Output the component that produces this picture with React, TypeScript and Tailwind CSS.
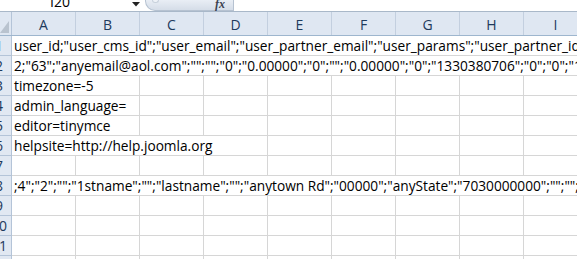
import React from "react";

const cols = ["A", "B", "C", "D", "E", "F", "G", "H", "I"];

// text per row and how many columns it spills across
const rows: { text?: string; span?: number }[] = [
  {
    text: 'user_id;"user_cms_id";"user_email";"user_partner_email";"user_params";"user_partner_id";"user_partner_name"',
    span: 9,
  },
  {
    text: '2;"63";"anyemail@aol.com";"";"";"0";"0.00000";"0";"";"0.00000";"0";"1330380706";"0";"0";"1441";"0"',
    span: 9,
  },
  { text: "timezone=-5", span: 2 },
  { text: "admin_language=", span: 2 },
  { text: "editor=tinymce", span: 2 },
  { text: "helpsite=http://help.joomla.org", span: 4 },
  {},
  {
    text: ';4";"2";"";"1stname";"";"lastname";"";"anytown Rd";"00000";"anyState";"7030000000";"";"";"";"0"',
    span: 9,
  },
  {},
  {},
  {},
  {},
];

function RowHeader({ n }: { n: number }) {
  return (
    <div className="w-[12px] shrink-0 h-full overflow-hidden bg-[#e1e8f2] border-r border-b border-[#b4c4d8]">
      <div className="w-[26px] -ml-[14px] pt-[1px] text-center text-[14px] leading-[18px] text-[#1e3a5c]">
        {n}
      </div>
    </div>
  );
}

function Cell({ width, children }: { width: number; children?: React.ReactNode }) {
  return (
    <div
      className="shrink-0 h-full border-r border-b border-[#d6d6d6] pl-[2px] pt-[1px] whitespace-nowrap overflow-visible text-[13.7px] leading-[18px] text-black"
      style={{ width }}
    >
      {children}
    </div>
  );
}

export default function App() {
  return (
    <div
      className="w-[577px] h-[259px] overflow-hidden bg-white"
      style={{ fontFamily: '"Open Sans", "Liberation Sans", sans-serif' }}
    >
      {/* name box + formula bar strip */}
      <div className="h-[12px] flex border-b border-[#a9b8c9] overflow-hidden">
        <div className="w-[145px] shrink-0 relative bg-white">
          <div className="w-[120px] text-center text-[14px] leading-[14px] -mt-[5px] text-black">I20</div>
          <svg className="absolute left-[132px] top-[2px]" width="8" height="5" viewBox="0 0 8 5">
            <polygon points="0,0 8,0 4,4.5" fill="#222" />
          </svg>
        </div>
        <div className="w-[89px] shrink-0 h-[11px] relative rounded-bl-[10px] border-l border-b border-r border-[#b6c2d1] bg-gradient-to-b from-[#e9eef5] to-[#d5dde8]">
          <div className="absolute left-[6px] top-0 w-[7px] h-[3px] rounded-b-[3px] bg-[#eef2f7] border border-t-0 border-[#c8d1dc]" />
          <span
            className="absolute right-[8px] -top-[3px] text-[12px] leading-[14px] italic font-bold text-[#3b4250]"
            style={{ fontFamily: '"Liberation Serif", serif' }}
          >
            fx
          </span>
        </div>
        <div className="flex-1 bg-white" />
      </div>

      {/* column headers */}
      <div className="h-[24px] flex bg-[#dfe7f2] border-b border-[#9eb6ce]">
        <div className="w-[12px] shrink-0 h-full border-r border-[#b4c4d8] relative">
          <svg className="absolute left-0 top-[8px]" width="10" height="14" viewBox="0 0 10 14">
            <polygon points="9,1 9,13 0,13" fill="#b9c3cf" />
          </svg>
        </div>
        {cols.map((c) => (
          <div
            key={c}
            className="w-[64px] shrink-0 h-full border-r border-[#c3cfdf] flex items-center justify-center pt-[1px] text-[14px] text-[#1e3a5c]"
          >
            {c}
          </div>
        ))}
      </div>

      {/* grid */}
      {rows.map((r, i) => {
        const span = r.span ?? 0;
        return (
          <div key={i} className="h-[20px] flex">
            <RowHeader n={i + 1} />
            {span > 0 && (
              <Cell width={64 * span}>{r.text}</Cell>
            )}
            {cols.slice(span).map((c) => (
              <Cell key={c} width={64} />
            ))}
          </div>
        );
      })}
    </div>
  );
}
